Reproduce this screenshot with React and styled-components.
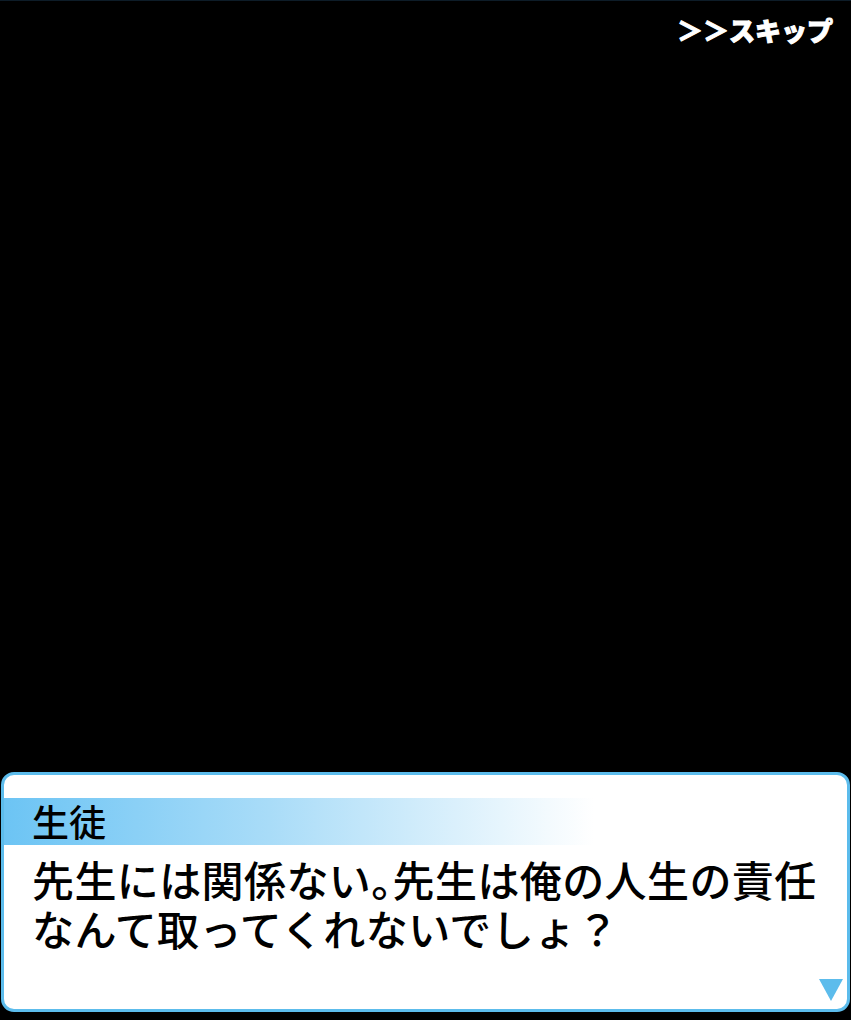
import React from "react";
import styled, { createGlobalStyle } from "styled-components";

const GlobalStyle = createGlobalStyle`
  html, body {
    margin: 0;
    padding: 0;
    background: #000;
  }
  body {
    font-family: "Noto Sans CJK JP", "Noto Sans", sans-serif;
  }
`;

const Screen = styled.div`
  width: 851px;
  height: 1020px;
  background: #000;
  border-top: 1px solid #0d1c28;
  box-sizing: border-box;
  display: flex;
  flex-direction: column;
`;

const TopBar = styled.div`
  display: flex;
  justify-content: flex-end;
  padding: 11px 18px 0 0;
`;

const SkipButton = styled.button`
  background: none;
  border: none;
  padding: 0;
  color: #fff;
  font-family: "Noto Sans CJK JP", sans-serif;
  font-size: 26px;
  font-weight: 900;
  line-height: 36px;
  -webkit-text-stroke: 1px #fff;
  cursor: pointer;
`;

const Stage = styled.div`
  flex: 1;
`;

const DialogBox = styled.div`
  margin: 0 1px 8px 1px;
  height: 240px;
  box-sizing: border-box;
  background: #fff;
  border: 3px solid #5cbcec;
  border-radius: 13px;
  padding-top: 23px;
  display: flex;
  flex-direction: column;
  position: relative;
`;

const NameBand = styled.div`
  width: 590px;
  height: 47px;
  background: linear-gradient(90deg, #6cc4f4 0%, #a9dcf8 45%, #ffffff 100%);
  display: flex;
  align-items: center;
  padding-left: 28px;
  box-sizing: border-box;
`;

const Name = styled.span`
  font-size: 37px;
  font-weight: 500;
  color: #000;
  line-height: 47px;
`;

const Message = styled.p`
  margin: 9px 0 0 28px;
  font-size: 42px;
  font-weight: 500;
  line-height: 49px;
  letter-spacing: 0.4px;
  color: #000;
  white-space: nowrap;
`;

const Punct = styled.span`
  font-feature-settings: "halt" 1;
`;

const NextArrow = styled.svg`
  position: absolute;
  right: 4px;
  bottom: 8px;
`;

export default function App() {
  return (
    <>
      <GlobalStyle />
      <Screen>
        <TopBar>
          <SkipButton>＞＞スキップ</SkipButton>
        </TopBar>
        <Stage />
        <DialogBox>
          <NameBand>
            <Name>生徒</Name>
          </NameBand>
          <Message>
            先生には関係ない<Punct>。</Punct>先生は俺の人生の責任
            <br />
            なんて取ってくれないでしょ？
          </Message>
          <NextArrow width="24" height="22" viewBox="0 0 24 22">
            <polygon points="0,0 24,0 12,22" fill="#5cbcec" />
          </NextArrow>
        </DialogBox>
      </Screen>
    </>
  );
}
